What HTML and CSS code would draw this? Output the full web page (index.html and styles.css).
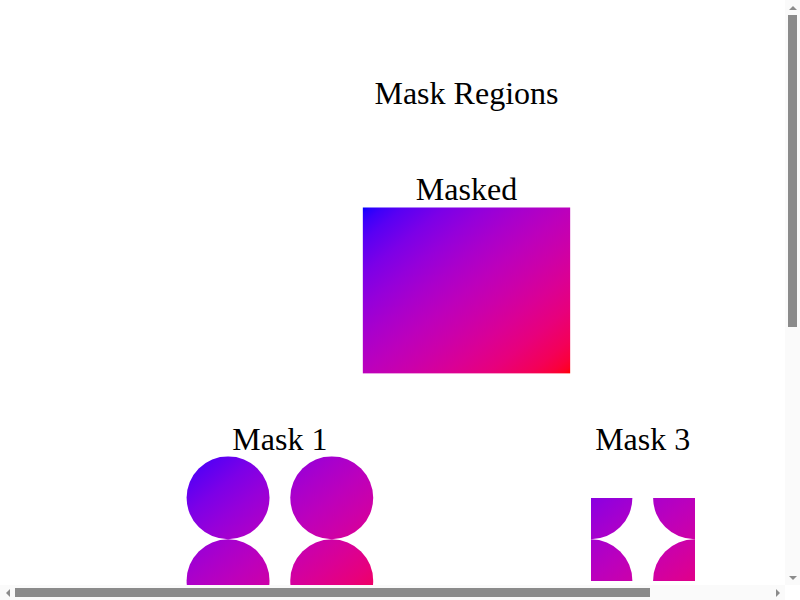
FILE: index.html
```html
<!DOCTYPE html>
<html lang="en">
<head>
<meta charset="utf-8">
<title>Mask Regions</title>
<link rel="stylesheet" href="styles.css">
</head>
<body>
<div class="screen">
  <div class="content">
    <svg class="canvas" width="933" height="1037" viewBox="0 0 450 500" xmlns="http://www.w3.org/2000/svg">
      <defs>
        <linearGradient id="grad" x1="0" y1="0" x2="1" y2="1">
          <stop offset="0" stop-color="rgb(0,0,255)"/>
          <stop offset="0.02" stop-color="rgb(39,0,253)"/>
          <stop offset="0.05" stop-color="rgb(63,0,249)"/>
          <stop offset="0.1" stop-color="rgb(89,0,243)"/>
          <stop offset="0.2" stop-color="rgb(124,0,231)"/>
          <stop offset="0.3" stop-color="rgb(149,0,218)"/>
          <stop offset="0.4" stop-color="rgb(170,0,203)"/>
          <stop offset="0.5" stop-color="rgb(188,0,188)"/>
          <stop offset="0.6" stop-color="rgb(203,0,170)"/>
          <stop offset="0.7" stop-color="rgb(218,0,149)"/>
          <stop offset="0.8" stop-color="rgb(231,0,124)"/>
          <stop offset="0.9" stop-color="rgb(243,0,89)"/>
          <stop offset="0.95" stop-color="rgb(249,0,63)"/>
          <stop offset="0.98" stop-color="rgb(253,0,39)"/>
          <stop offset="1" stop-color="rgb(255,0,0)"/>
        </linearGradient>
        <mask id="mask1" maskUnits="userSpaceOnUse" x="0" y="0" width="450" height="500">
          <circle cx="110" cy="240" r="20" fill="#fff"/>
          <circle cx="160" cy="240" r="20" fill="#fff"/>
          <circle cx="110" cy="280" r="20" fill="#fff"/>
          <circle cx="160" cy="280" r="20" fill="#fff"/>
        </mask>
        <mask id="mask3" maskUnits="objectBoundingBox" x="0.25" y="0.25" width="0.5" height="0.5">
          <circle cx="285" cy="240" r="20" fill="#fff"/>
          <circle cx="335" cy="240" r="20" fill="#fff"/>
          <circle cx="285" cy="280" r="20" fill="#fff"/>
          <circle cx="335" cy="280" r="20" fill="#fff"/>
        </mask>
      </defs>

      <text class="label" x="225" y="50.2">Mask Regions</text>

      <text class="label" x="225" y="96.2">Masked</text>
      <rect x="175" y="100" width="100" height="80" fill="url(#grad)"/>

      <text class="label" x="135" y="217">Mask 1</text>
      <rect x="85" y="220" width="100" height="80" fill="url(#grad)" mask="url(#mask1)"/>

      <text class="label" x="310" y="217">Mask 3</text>
      <rect x="260" y="220" width="100" height="80" fill="url(#grad)" mask="url(#mask3)"/>
    </svg>
  </div>

  <div class="vbar">
    <div class="sb-btn"><span class="arrow arrow-up"></span></div>
    <div class="vtrack"><div class="vthumb"></div></div>
    <div class="sb-btn"><span class="arrow arrow-down"></span></div>
  </div>

  <div class="hbar">
    <div class="sb-btn"><span class="arrow arrow-left"></span></div>
    <div class="htrack"><div class="hthumb"></div></div>
    <div class="sb-btn"><span class="arrow arrow-right"></span></div>
  </div>

  <div class="corner"></div>
</div>
</body>
</html>
```

FILE: styles.css
```css
html, body {
  margin: 0;
  padding: 0;
  background: #ffffff;
  overflow: hidden;
}

.screen {
  display: grid;
  grid-template-columns: 785px 15px;
  grid-template-rows: 585px 15px;
  width: 800px;
  height: 600px;
}

.content {
  overflow: hidden;
  background: #ffffff;
}

.canvas {
  display: block;
}

.label {
  font-family: "Liberation Serif", "Times New Roman", serif;
  font-size: 15.45px;
  text-anchor: middle;
  fill: #000000;
}

/* scrollbars */
.vbar {
  display: flex;
  flex-direction: column;
  background: #fafafa;
}

.hbar {
  display: flex;
  flex-direction: row;
  background: #fafafa;
}

.corner {
  background: #ffffff;
}

.sb-btn {
  flex: 0 0 15px;
  width: 15px;
  height: 15px;
  display: flex;
  align-items: center;
  justify-content: center;
}

.vtrack {
  flex: 1;
}

.vthumb {
  width: 9px;
  height: 312px;
  margin-left: 3px;
  background: #8b8b8b;
}

.htrack {
  flex: 1;
  display: flex;
  align-items: center;
}

.hthumb {
  width: 635px;
  height: 9px;
  background: #8b8b8b;
}

.arrow {
  display: block;
  width: 0;
  height: 0;
}

.arrow-up {
  border-left: 4px solid transparent;
  border-right: 4px solid transparent;
  border-bottom: 4px solid #8b8b8b;
}

.arrow-down {
  border-left: 4px solid transparent;
  border-right: 4px solid transparent;
  border-top: 4px solid #8b8b8b;
}

.arrow-left {
  border-top: 4px solid transparent;
  border-bottom: 4px solid transparent;
  border-right: 4px solid #8b8b8b;
}

.arrow-right {
  border-top: 4px solid transparent;
  border-bottom: 4px solid transparent;
  border-left: 4px solid #8b8b8b;
}
```
